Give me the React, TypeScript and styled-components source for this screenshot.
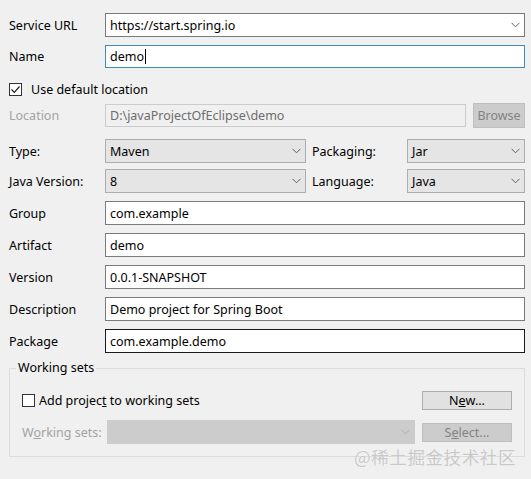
import styled, { createGlobalStyle } from 'styled-components';

const GlobalStyle = createGlobalStyle`
  html, body {
    margin: 0;
    padding: 0;
    background: #f0f0f0;
  }
  body {
    font-family: "Noto Sans", "Noto Sans CJK SC", sans-serif;
    font-size: 12.5px;
    color: #000;
  }
`;

const Page = styled.div`
  position: relative;
  width: 531px;
  height: 479px;
  box-sizing: border-box;
  padding: 13px 6px 0 9px;
  display: flex;
  flex-direction: column;
  overflow: hidden;
`;

const Row = styled.div<{ $top?: number; $h?: number }>`
  display: grid;
  grid-template-columns: 96px minmax(0, 1fr);
  align-items: center;
  height: ${(p) => p.$h ?? 24}px;
  margin-top: ${(p) => p.$top ?? 0}px;
`;

const SplitRow = styled.div<{ $top?: number }>`
  display: grid;
  grid-template-columns: 96px 201px 101px minmax(0, 1fr);
  align-items: center;
  height: 24px;
  margin-top: ${(p) => p.$top ?? 0}px;
`;

const LocationRow = styled.div`
  display: grid;
  grid-template-columns: 96px 361px minmax(0, 1fr);
  align-items: center;
  height: 25px;
  margin-top: 5px;
`;

const Label = styled.span<{ $disabled?: boolean; $pad?: number }>`
  color: ${(p) => (p.$disabled ? '#a3a3a3' : '#000')};
  padding-left: ${(p) => p.$pad ?? 0}px;
  white-space: nowrap;
`;

const Field = styled.div<{ $border?: string; $bg?: string; $color?: string; $h?: number }>`
  box-sizing: border-box;
  height: ${(p) => (p.$h ? `${p.$h}px` : '100%')};
  border: 1px solid ${(p) => p.$border ?? '#7a7a7a'};
  background: ${(p) => p.$bg ?? '#fff'};
  color: ${(p) => p.$color ?? '#000'};
  display: flex;
  align-items: center;
  padding: 0 4px;
  white-space: nowrap;
  overflow: hidden;
`;

const Combo = styled.div<{ $editable?: boolean; $disabled?: boolean }>`
  box-sizing: border-box;
  height: 100%;
  border: 1px solid ${(p) => (p.$editable ? '#7a7a7a' : p.$disabled ? '#cccccc' : '#adadad')};
  background: ${(p) => (p.$editable ? '#fff' : p.$disabled ? '#cccccc' : '#e5e5e5')};
  display: flex;
  align-items: center;
  justify-content: space-between;
  padding: 0 4px 0 4px;
  white-space: nowrap;
`;

const Caret = styled.span`
  display: inline-block;
  width: 0;
  height: 15px;
  border-left: 1px solid #000;
  margin-left: 1px;
`;

const CheckLine = styled.label<{ $top?: number; $gap?: number }>`
  display: flex;
  align-items: center;
  gap: ${(p) => p.$gap ?? 8}px;
  height: 18px;
  margin-top: ${(p) => p.$top ?? 0}px;
`;

const Box = styled.span`
  box-sizing: border-box;
  width: 13px;
  height: 13px;
  border: 1px solid #333;
  background: #fff;
  display: flex;
  align-items: center;
  justify-content: center;
`;

const Button = styled.div<{ $disabled?: boolean; $h?: number }>`
  box-sizing: border-box;
  height: ${(p) => (p.$h ? `${p.$h}px` : '100%')};
  border: 1px solid ${(p) => (p.$disabled ? '#bfbfbf' : '#adadad')};
  background: ${(p) => (p.$disabled ? '#cccccc' : '#e1e1e1')};
  color: ${(p) => (p.$disabled ? '#838383' : '#000')};
  display: flex;
  align-items: center;
  justify-content: center;
  white-space: nowrap;
  overflow: hidden;
`;

const Side = styled.div`
  padding-left: 7px;
  min-width: 0;
`;

const Fieldset = styled.fieldset`
  margin: 7px 0 0 0;
  padding: 12px 12px 12px 12px;
  border: 1px solid #dcdcdc;
  min-width: 0;
`;

const Legend = styled.legend`
  padding: 0 2px;
  margin-left: -6px;
  line-height: 16px;
`;

const SetGrid = styled.div`
  display: grid;
  grid-template-columns: 85px 308px 97px;
  row-gap: 8px;
  grid-auto-rows: 24px;
  align-items: center;
`;

const Span2 = styled.div`
  grid-column: 1 / 3;
`;

const U = styled.span`
  text-decoration: underline;
`;

const Watermark = styled.div`
  position: absolute;
  right: 15px;
  top: 444px;
  font-family: "Noto Sans CJK SC", sans-serif;
  font-size: 17.5px;
  color: #c8c8c8;
  text-shadow: 0 0 1px #fff;
  letter-spacing: 0.6px;
`;

function Chevron({ color = '#606060' }: { color?: string }) {
  return (
    <svg width="9" height="6" viewBox="0 0 9 6">
      <path d="M0.5 0.8 L4.5 4.8 L8.5 0.8" fill="none" stroke={color} strokeWidth="1" />
    </svg>
  );
}

function Check() {
  return (
    <svg width="11" height="11" viewBox="0 0 11 11">
      <path d="M1.5 5.5 L4.3 8.3 L9.5 2.5" fill="none" stroke="#222" strokeWidth="1.2" />
    </svg>
  );
}

export default function App() {
  return (
    <>
      <GlobalStyle />
      <Page>
        <Row>
          <Label>Service URL</Label>
          <Combo $editable>
            <span>https://start.spring.io</span>
            <Chevron />
          </Combo>
        </Row>
        <Row $top={8} $h={23}>
          <Label>Name</Label>
          <Field $border="#3c8dbc">
            demo
            <Caret />
          </Field>
        </Row>
        <CheckLine $top={12} $gap={9}>
          <Box>
            <Check />
          </Box>
          <span>Use default location</span>
        </CheckLine>
        <LocationRow>
          <Label $disabled>Location</Label>
          <Field $border="#cccccc" $bg="#f0f0f0" $color="#6d6d6d" $h={23}>
            D:\javaProjectOfEclipse\demo
          </Field>
          <Side>
            <Button $disabled $h={25}>
              Browse
            </Button>
          </Side>
        </LocationRow>
        <SplitRow $top={11}>
          <Label>Type:</Label>
          <Combo>
            <span>Maven</span>
            <Chevron />
          </Combo>
          <Label $pad={6}>Packaging:</Label>
          <Combo>
            <span>Jar</span>
            <Chevron />
          </Combo>
        </SplitRow>
        <SplitRow $top={6}>
          <Label>Java Version:</Label>
          <Combo>
            <span>8</span>
            <Chevron />
          </Combo>
          <Label $pad={6}>Language:</Label>
          <Combo>
            <span>Java</span>
            <Chevron />
          </Combo>
        </SplitRow>
        <Row $top={8}>
          <Label>Group</Label>
          <Field>com.example</Field>
        </Row>
        <Row $top={8}>
          <Label>Artifact</Label>
          <Field>demo</Field>
        </Row>
        <Row $top={8}>
          <Label>Version</Label>
          <Field>0.0.1-SNAPSHOT</Field>
        </Row>
        <Row $top={8}>
          <Label>Description</Label>
          <Field>Demo project for Spring Boot</Field>
        </Row>
        <Row $top={8}>
          <Label>Package</Label>
          <Field $border="#1a1a1a">com.example.demo</Field>
        </Row>
        <Fieldset>
          <Legend>Working sets</Legend>
          <SetGrid>
            <Span2>
              <CheckLine $gap={4}>
                <Box />
                <span>
                  Add projec<U>t</U> to working sets
                </span>
              </CheckLine>
            </Span2>
            <Side>
              <Button>
                N<U>e</U>w...
              </Button>
            </Side>
            <Label $disabled>
              W<U>o</U>rking sets:
            </Label>
            <Combo $disabled>
              <span />
              <Chevron color="#b0b0b0" />
            </Combo>
            <Side>
              <Button $disabled>
                S<U>e</U>lect...
              </Button>
            </Side>
          </SetGrid>
        </Fieldset>
        <Watermark>@稀土掘金技术社区</Watermark>
      </Page>
    </>
  );
}
